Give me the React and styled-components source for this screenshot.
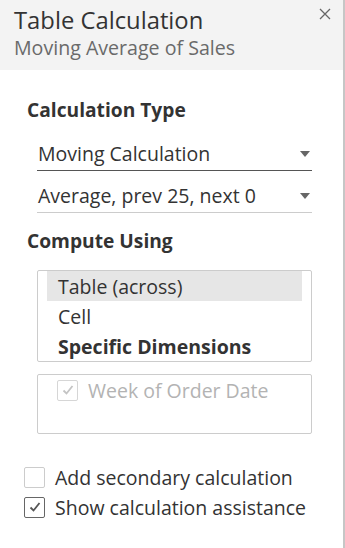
import React from 'react';
import styled, { createGlobalStyle } from 'styled-components';

const GlobalStyle = createGlobalStyle`
  body {
    margin: 0;
    background: #ffffff;
    font-family: 'Open Sans', 'Liberation Sans', sans-serif;
    color: #333333;
  }
`;

const Panel = styled.div`
  width: 343px;
  height: 548px;
  border-right: 2px solid #c6c6c6;
  background: #ffffff;
  position: relative;
`;

const Header = styled.div`
  height: 70px;
  box-sizing: border-box;
  padding: 4px 14px 0 14px;
  background: #f3f3f3;
  position: relative;
`;

const Title = styled.div`
  font-size: 23.8px;
  line-height: 32px;
  color: #333333;
`;

const Subtitle = styled.div`
  font-size: 19.6px;
  line-height: 24px;
  color: #6a6a6a;
`;

const Close = styled.button`
  position: absolute;
  top: 7px;
  right: 10px;
  width: 16px;
  height: 16px;
  padding: 0;
  border: none;
  background: transparent;
  cursor: pointer;
`;

const Body = styled.div`
  padding: 26px 0 0 27px;
`;

const Heading = styled.div`
  font-size: 19.2px;
  font-weight: 700;
  line-height: 28px;
  color: #333333;
  margin-top: ${(p) => p.gap || 0}px;
`;

const Select = styled.div`
  width: 275px;
  margin-left: 10px;
  height: 34px;
  box-sizing: border-box;
  display: flex;
  align-items: center;
  justify-content: space-between;
  border-bottom: 1px solid ${(p) => (p.active ? '#555555' : '#cccccc')};
  font-size: 19.5px;
  color: #333333;
  padding: 0 1px 0 1px;
  margin-top: ${(p) => p.gap || 0}px;
`;

const Caret = styled.span`
  width: 0;
  height: 0;
  border-left: 5px solid transparent;
  border-right: 5px solid transparent;
  border-top: 6px solid #666666;
  margin-right: 1px;
`;

const ListBox = styled.div`
  width: 275px;
  margin: 15px 0 0 10px;
  box-sizing: border-box;
  border: 1px solid #cccccc;
  border-radius: 2px;
  padding: 0 9px;
`;

const ListItem = styled.div`
  height: 30px;
  display: flex;
  align-items: center;
  padding-left: 11px;
  font-size: 19.5px;
  font-weight: ${(p) => (p.bold ? 700 : 400)};
  background: ${(p) => (p.selected ? '#e6e6e6' : 'transparent')};
  color: #333333;
`;

const DimBox = styled.div`
  width: 275px;
  height: 60px;
  margin: 12px 0 0 10px;
  box-sizing: border-box;
  border: 1px solid #cccccc;
  border-radius: 2px;
  padding: 0 0 0 19px;
`;

const CheckRow = styled.label`
  display: flex;
  align-items: center;
  gap: 10px;
  height: 30px;
  font-size: 19.5px;
  color: ${(p) => (p.disabled ? '#b3b3b3' : '#333333')};
`;

const Box = styled.span`
  width: 21px;
  height: 21px;
  box-sizing: border-box;
  border: 1px solid ${(p) => p.edge};
  border-radius: 2px;
  display: flex;
  align-items: center;
  justify-content: center;
  background: #ffffff;
  flex: none;
`;

const Footer = styled.div`
  margin: 28px 0 0 -3px;
`;

const Check = ({ color }) => (
  <svg width="12" height="12" viewBox="0 0 12 12">
    <path d="M1.5 6.5 L4.5 9.5 L10.5 2" fill="none" stroke={color} strokeWidth="1.8" />
  </svg>
);

const CheckBox = ({ checked, edge, mark }) => (
  <Box edge={edge}>{checked && <Check color={mark} />}</Box>
);

export default function App() {
  return (
    <>
      <GlobalStyle />
      <Panel>
        <Header>
          <Title>Table Calculation</Title>
          <Subtitle>Moving Average of Sales</Subtitle>
          <Close aria-label="close">
            <svg width="12" height="12" viewBox="0 0 12 12">
              <path d="M1 1 L11 11 M11 1 L1 11" stroke="#666666" strokeWidth="1.3" />
            </svg>
          </Close>
        </Header>
        <Body>
          <Heading>Calculation Type</Heading>
          <Select active gap={13}>
            Moving Calculation
            <Caret />
          </Select>
          <Select gap={8}>
            Average, prev 25, next 0
            <Caret />
          </Select>
          <Heading gap={14}>Compute Using</Heading>
          <ListBox>
            <ListItem selected>Table (across)</ListItem>
            <ListItem>Cell</ListItem>
            <ListItem bold>Specific Dimensions</ListItem>
          </ListBox>
          <DimBox>
            <CheckRow disabled>
              <CheckBox checked edge="#d6d6d6" mark="#c4c4c4" />
              Week of Order Date
            </CheckRow>
          </DimBox>
          <Footer>
            <CheckRow>
              <CheckBox edge="#cccccc" />
              Add secondary calculation
            </CheckRow>
            <CheckRow>
              <CheckBox checked edge="#666666" mark="#555555" />
              Show calculation assistance
            </CheckRow>
          </Footer>
        </Body>
      </Panel>
    </>
  );
}
